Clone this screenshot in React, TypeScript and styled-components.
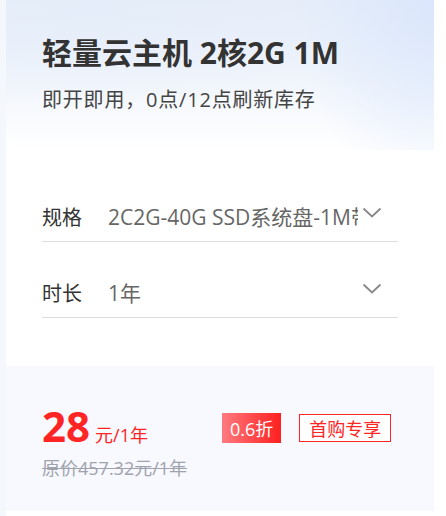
import React from "react";
import styled, { createGlobalStyle } from "styled-components";

const Global = createGlobalStyle`
  html, body { margin: 0; padding: 0; background: #ffffff; }
  body { font-family: "Open Sans", "Noto Sans CJK SC", "Noto Sans", sans-serif; }
  * { box-sizing: border-box; }
`;

const Page = styled.div`
  width: 446px;
  height: 516px;
  padding: 0 12px 5px 6px;
  background: linear-gradient(90deg, #f4f7fc 0px, #f4f7fc 6px, #ffffff 6px);
`;

const Card = styled.div`
  width: 428px;
  height: 511px;
  display: flex;
  flex-direction: column;
  background: #ffffff;
  overflow: hidden;
`;

const Header = styled.div`
  height: 150px;
  padding: 33px 36px 0;
  background:
    radial-gradient(ellipse 140px 200px at 100% 0%, rgba(216, 229, 252, 0.85), rgba(216, 229, 252, 0) 100%),
    radial-gradient(ellipse 420px 90px at 20% 10%, rgba(228, 237, 250, 0.8), rgba(228, 237, 250, 0) 100%),
    linear-gradient(180deg, #e8eef9 0%, #f2f6fc 55%, #ffffff 100%);
`;

const Title = styled.h1`
  margin: 0;
  font-size: 30px;
  line-height: 40px;
  font-weight: 700;
  color: #333333;
`;

const Subtitle = styled.p`
  margin: 13px 0 0;
  font-size: 20px;
  line-height: 28px;
  letter-spacing: 0.8px;
  color: #444444;
`;

const Form = styled.div`
  height: 216px;
  padding: 43px 36px 0;
  display: flex;
  flex-direction: column;
  gap: 27px;
`;

const Row = styled.div`
  height: 49px;
  display: flex;
  align-items: center;
  border-bottom: 1px solid #dddddd;
  padding-bottom: 2px;
`;

const Label = styled.span`
  width: 66px;
  flex: none;
  font-size: 20px;
  color: #333333;
`;

const Value = styled.span`
  width: 250px;
  flex: none;
  white-space: nowrap;
  overflow: hidden;
  font-size: 21px;
  color: #666666;
`;

const Chevron = styled.svg`
  margin-left: 4px;
  width: 20px;
  height: 12px;
  flex: none;
  position: relative;
  top: -3px;
`;

const PriceBox = styled.div`
  flex: 1;
  background: #f8f9fe;
  padding: 37px 36px 0;
  display: flex;
  flex-direction: column;
`;

const PriceLine = styled.div`
  display: flex;
  align-items: center;
`;

const Amount = styled.div`
  display: flex;
  align-items: baseline;
  color: #ff2525;
  width: 180px;
  position: relative;
  top: -2px;
`;

const Big = styled.span`
  font-size: 42px;
  font-weight: 700;
  line-height: 50px;
`;

const Unit = styled.span`
  margin-left: 5px;
  font-size: 18px;
`;

const Discount = styled.span`
  height: 30px;
  padding: 0 8px;
  display: flex;
  align-items: center;
  font-size: 18px;
  color: #ffffff;
  background: linear-gradient(90deg, #ff7a7f 0%, #ff1f1f 100%);
`;

const Tag = styled.span`
  margin-left: 18px;
  height: 28px;
  padding: 0 9px;
  display: flex;
  align-items: center;
  font-size: 18px;
  color: #ff2525;
  border: 1px solid #ff2525;
  background: #ffffff;
`;

const Original = styled.div`
  margin-top: 2px;
  font-size: 18px;
  line-height: 26px;
  color: #a0a3ad;
  text-decoration: line-through;
`;

const Arrow = () => (
  <Chevron viewBox="0 0 20 12">
    <path d="M1.5 1.5 L10 9.5 L18.5 1.5" fill="none" stroke="#888888" strokeWidth="1.8" />
  </Chevron>
);

export default function App() {
  return (
    <>
      <Global />
      <Page>
        <Card>
          <Header>
            <Title>轻量云主机 2核2G 1M</Title>
            <Subtitle>即开即用，0点/12点刷新库存</Subtitle>
          </Header>
          <Form>
            <Row>
              <Label>规格</Label>
              <Value>2C2G-40G SSD系统盘-1M带宽</Value>
              <Arrow />
            </Row>
            <Row>
              <Label>时长</Label>
              <Value>1年</Value>
              <Arrow />
            </Row>
          </Form>
          <PriceBox>
            <PriceLine>
              <Amount>
                <Big>28</Big>
                <Unit>元/1年</Unit>
              </Amount>
              <Discount>0.6折</Discount>
              <Tag>首购专享</Tag>
            </PriceLine>
            <Original>原价457.32元/1年</Original>
          </PriceBox>
        </Card>
      </Page>
    </>
  );
}
